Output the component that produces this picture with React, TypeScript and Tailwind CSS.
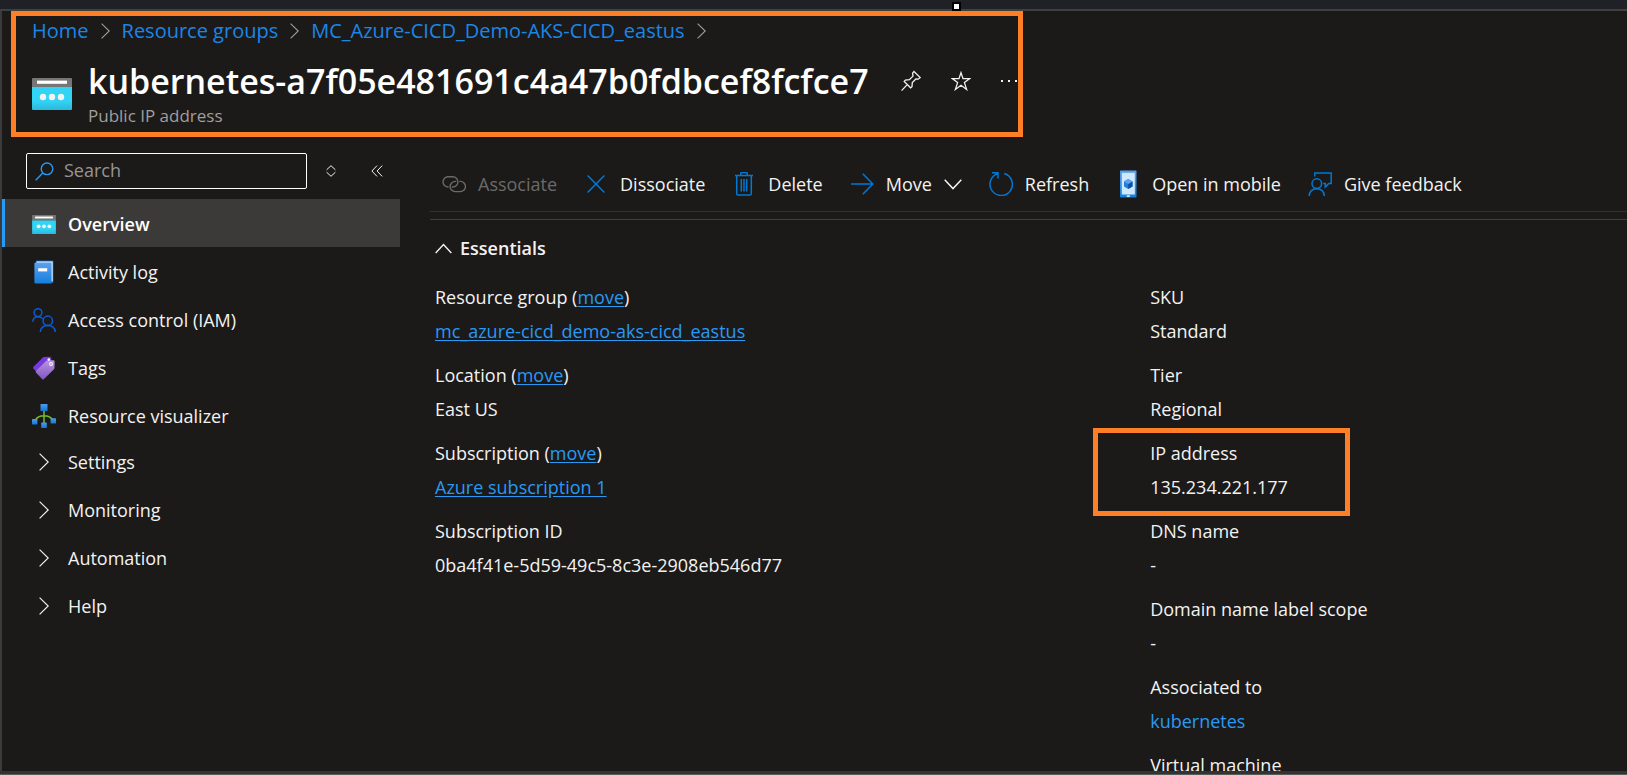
import type { ReactNode } from "react";

type IconProps = { className?: string };

const line = { fill: "none", stroke: "currentColor" } as const;

function ChevronIcon({ className }: IconProps) {
  return (
    <svg viewBox="0 0 10 18" className={className} {...line} strokeWidth="1.2" aria-hidden="true">
      <path d="M.6 .6 9.2 9 .6 17.4" />
    </svg>
  );
}

function CaretIcon({ className }: IconProps) {
  return (
    <svg viewBox="0 0 18 11" className={className} {...line} strokeWidth="1.5" aria-hidden="true">
      <path d="M.7 .8 9 9.6 17.3 .8" />
    </svg>
  );
}

function PublicIpIcon({ className }: IconProps) {
  return (
    <svg viewBox="0 0 40 32" className={className} aria-hidden="true">
      <defs>
        <linearGradient id="ip-body" x1="0" y1="0" x2="0" y2="1">
          <stop offset="0" stopColor="#32d4f5" />
          <stop offset=".6" stopColor="#32d4f5" />
          <stop offset="1" stopColor="#2bb8dc" />
        </linearGradient>
      </defs>
      <path d="M0 9h40v22a1 1 0 0 1-1 1H1a1 1 0 0 1-1-1z" fill="url(#ip-body)" />
      <path d="M1 0h38a1 1 0 0 1 1 1v8H0V1a1 1 0 0 1 1-1z" fill="#767676" />
      <path d="M5 2.6h30v3.2H5z" fill="#fff" />
      <circle cx="11" cy="19" r="3.2" fill="#f2f2f2" />
      <circle cx="20" cy="19" r="3.2" fill="#f2f2f2" />
      <circle cx="29" cy="19" r="3.2" fill="#f2f2f2" />
    </svg>
  );
}

function PinIcon() {
  return (
    <svg viewBox="0 0 20 22" className="h-[22px] w-5" {...line} strokeWidth="1.3" aria-hidden="true">
      <path d="M13 1.5 19.200 7.600 17.200 9.200 14.900 9 11.300 12.600 11 16.700 9.600 17.800 3.200 11.400 4.400 10.100 8.400 9.700 12 6.100 11.600 3.200zM6.200 14.600.6 20.600" />
    </svg>
  );
}

function StarIcon() {
  return (
    <svg viewBox="0 0 20 20" className="size-5" {...line} strokeWidth="1.3" aria-hidden="true">
      <path d="m10 1.600 2 6h6.800l-5.400 4 2.200 6.800-5.600-4.200-5.600 4.200 2.200-6.800-5.400-4H8z" />
    </svg>
  );
}

function MoreIcon() {
  return (
    <svg viewBox="0 0 16 4" className="h-1 w-4" fill="currentColor" aria-hidden="true">
      <path d="M0 1h2v2H0zM7 1h2v2H7zM14 1h2v2h-2z" />
    </svg>
  );
}

function SearchIcon() {
  return (
    <svg viewBox="0 0 19 19" className="size-[19px] text-[#2899f5]" {...line} strokeWidth="1.4" aria-hidden="true">
      <circle cx="12" cy="6.8" r="5.8" />
      <path d="M7.8 11 .7 18.2" />
    </svg>
  );
}

function SortIcon() {
  return (
    <svg viewBox="0 0 10 12" className="h-3 w-2.5" {...line} strokeWidth="1" aria-hidden="true">
      <path d="M.6 4.8 5 .7l4.4 4.1M.6 7.2 5 11.3l4.4-4.1" />
    </svg>
  );
}

function CollapseIcon() {
  return (
    <svg viewBox="0 0 12 12" className="size-3" {...line} strokeWidth="1" aria-hidden="true">
      <path d="M6 .6.9 6 6 11.4M11.2.6 6.1 6l5.1 5.4" />
    </svg>
  );
}

function LogIcon() {
  return (
    <svg viewBox="0 0 24 24" className="size-6" aria-hidden="true">
      <defs>
        <linearGradient id="log-body" x1="0" y1="0" x2="0" y2="1">
          <stop offset="0" stopColor="#5ea0ef" />
          <stop offset="1" stopColor="#1380dd" />
        </linearGradient>
      </defs>
      <path d="M4 .6h16.500a1 1 0 0 1 1 1v20.500a1 1 0 0 1-1 1H4z" fill="#0f5fa8" />
      <path d="M4.500 1.400h16.200v20H4.500z" fill="#e8f3fc" />
      <path d="M2.400 3.600a1.200 1.200 0 0 1 1.200-1.200H19.600V23.400H3.600a1.200 1.200 0 0 1-1.200-1.200z" fill="url(#log-body)" />
      <path d="M6.200 8.200h9v3.200h-9z" fill="#fff" />
    </svg>
  );
}

function PeopleIcon() {
  return (
    <svg viewBox="0 0 24 24" className="size-6 text-[#0a5bd6]" {...line} strokeWidth="1.5" aria-hidden="true">
      <circle cx="6" cy="4.600" r="3.900" />
      <path d="M.8 13.800C1 10.500 3 8.700 6 8.700c2.200 0 3.800.8 4.800 2.200" />
      <circle cx="15.800" cy="12.800" r="4.700" />
      <path d="M8.300 24c.4-4.200 3.400-6.500 7.500-6.500s7.100 2.300 7.500 6.500" />
    </svg>
  );
}

function TagIcon() {
  return (
    <svg viewBox="0 0 24 24" className="size-6" aria-hidden="true">
      <defs>
        <linearGradient id="tag-front" x1="0" y1="0" x2="0" y2="1">
          <stop offset="0" stopColor="#b796e3" />
          <stop offset="1" stopColor="#8254bd" />
        </linearGradient>
      </defs>
      <path d="M11.400.9 17.800.7a1.500 1.500 0 0 1 1.500 1.500V8L7.600 19.200 1.500 12.800a1.400 1.400 0 0 1 0-2z" fill="#773adc" />
      <path d="M14.600 4.600 21 4.300a1.500 1.500 0 0 1 1.600 1.500l-.1 6.300a1.500 1.500 0 0 1-.5 1.100L12 23a1.400 1.400 0 0 1-2 0l-5.800-6.200a1.400 1.400 0 0 1 0-2z" fill="url(#tag-front)" />
      <circle cx="16.800" cy="3.600" r="1.300" fill="#fff" />
      <circle cx="19" cy="8" r="1.900" fill="#fff" />
      <circle cx="19" cy="8" r=".8" fill="#8254bd" />
    </svg>
  );
}

function VisualizerIcon() {
  return (
    <svg viewBox="0 0 24 24" className="size-6" aria-hidden="true">
      <defs>
        <linearGradient id="node" x1="0" y1="0" x2="0" y2="1">
          <stop offset="0" stopColor="#4f9bee" />
          <stop offset="1" stopColor="#0f78d4" />
        </linearGradient>
      </defs>
      <path d="M12 6v13M3 16.500C5 13 7.600 11.800 12 11.800s7 1.200 9 4.700" fill="none" stroke="#76bc2d" strokeWidth="1.500" />
      <rect x="8.500" y="0" width="7" height="7" rx=".6" fill="url(#node)" />
      <rect x="0" y="15" width="5.400" height="5.400" rx=".6" fill="url(#node)" />
      <rect x="18.600" y="14.200" width="5.400" height="5.400" rx=".6" fill="url(#node)" />
      <rect x="9.200" y="18.600" width="5.600" height="5.400" rx=".6" fill="url(#node)" />
    </svg>
  );
}

function LinkIcon() {
  return (
    <svg viewBox="0 0 24 24" className="size-6" {...line} strokeWidth="1.400" aria-hidden="true">
      <path d="M6.600 14.900A5 5 0 0 1 5.600 4.800h5.200a5.100 5.100 0 0 1 0 10.200H9.800" />
      <path d="M17.400 9.400h1a5 5 0 0 1 0 10.200h-5.200a5.100 5.100 0 0 1 0-10.200h1" />
    </svg>
  );
}

function CrossIcon() {
  return (
    <svg viewBox="0 0 24 24" className="size-6 text-[#0078d4]" {...line} strokeWidth="1.500" aria-hidden="true">
      <path d="m3.600 3.400 16.800 17.200M20.400 3.400 3.600 20.600" />
    </svg>
  );
}

function TrashIcon() {
  return (
    <svg viewBox="0 0 24 24" className="size-6 text-[#0078d4]" {...line} strokeWidth="1.500" aria-hidden="true">
      <path d="M3 3.500h18M8.800 3.500V1.200q0-.6.6-.6h5.200q.6 0 .6.600v2.300M4.700 3.500v18.300q0 1.300 1.300 1.300h12q1.300 0 1.300-1.300V3.500M9.300 7v12.500M12 7v12.500M14.700 7v12.500" />
    </svg>
  );
}

function ArrowIcon() {
  return (
    <svg viewBox="0 0 24 24" className="size-6 text-[#0078d4]" {...line} strokeWidth="1.500" aria-hidden="true">
      <path d="M1 12h21.500M12.800 1.800 22.800 12l-10 10.200" />
    </svg>
  );
}

function RefreshIcon() {
  return (
    <svg viewBox="0 0 24 24" className="size-6 text-[#0078d4]" {...line} strokeWidth="1.500" aria-hidden="true">
      <path d="M15.200 1.500A11.200 11.200 0 1 1 8.500 1.700M3 .8h6v5.600" />
    </svg>
  );
}

function MobileIcon() {
  return (
    <svg viewBox="0 0 24 28" className="h-7 w-6" aria-hidden="true">
      <defs>
        <linearGradient id="phone" x1="0" y1="0" x2="0" y2="1">
          <stop offset="0" stopColor="#5ea0ef" />
          <stop offset="1" stopColor="#1380dd" />
        </linearGradient>
      </defs>
      <rect x="4" y=".5" width="16.500" height="27" rx=".8" fill="url(#phone)" />
      <path d="M5.800 2.800h13v21.700h-13z" fill="#cfe8fb" />
      <path d="M12.200 9 16.500 11.400v5.100l-4.300 2.500L8 16.500v-5.100z" fill="#1f7fe0" />
      <path d="M12.200 14V19l4.300-2.500v-5.100z" fill="#0f4fa0" />
      <path d="m12.200 9 4.300 2.400-4.300 2.500L8 11.400z" fill="#5ea0ef" />
      <rect x="10.800" y="25.300" width="3" height="1.600" fill="#e8f3fc" />
    </svg>
  );
}

function FeedbackIcon() {
  return (
    <svg viewBox="0 0 24 24" className="size-6 text-[#0078d4]" {...line} strokeWidth="1.500" aria-hidden="true">
      <path d="M6.800 4.500V1h16.400v10.500h-2.300l-3.600 3.400v-3.400h-2" />
      <circle cx="8.800" cy="11.600" r="4.800" />
      <path d="M1.200 24c.3-4.600 3.300-7.300 7.600-7.300s7.200 2.700 7.500 7.300" />
    </svg>
  );
}

const crumbs = ["Home", "Resource groups", "MC_Azure-CICD_Demo-AKS-CICD_eastus"];

const pages = [
  { label: "Overview", icon: <PublicIpIcon className="h-[19px] w-6" />, active: true },
  { label: "Activity log", icon: <LogIcon /> },
  { label: "Access control (IAM)", icon: <PeopleIcon /> },
  { label: "Tags", icon: <TagIcon /> },
  { label: "Resource visualizer", icon: <VisualizerIcon /> },
];

const sections = ["Settings", "Monitoring", "Automation", "Help"];

function Command({ icon, label, menu, disabled }: { icon: ReactNode; label: string; menu?: boolean; disabled?: boolean }) {
  return (
    <button type="button" disabled={disabled} className="flex shrink-0 items-center gap-3 whitespace-nowrap disabled:text-[#6b6a68]">
      {icon}
      <span>{label}</span>
      {menu && <CaretIcon className="h-[11px] w-[18px]" />}
    </button>
  );
}

function Field({ label, value, href, movable, underline, marked }: {
  label: string;
  value: string;
  href?: boolean;
  movable?: boolean;
  underline?: boolean;
  marked?: boolean;
}) {
  return (
    <div className="relative flex h-[78px] flex-col gap-2 whitespace-nowrap">
      {marked && (
        <div className="pointer-events-none absolute -top-3 -left-[57px] h-[88px] w-[257px] border-[5px] border-[#ff7f27]" />
      )}
      <dt className="leading-[26px]">
        {label}
        {movable && (
          <>
            {" ("}
            <a href="#move" className="text-[#2899f5] underline underline-offset-2">move</a>
            {")"}
          </>
        )}
      </dt>
      <dd className="leading-[26px]">
        {href ? (
          <a href="#open" className={underline ? "text-[#2899f5] underline underline-offset-2" : "text-[#2899f5]"}>
            {value}
          </a>
        ) : (
          value
        )}
      </dd>
    </div>
  );
}

export default function App() {
  return (
    <div className="flex h-screen flex-col overflow-hidden bg-[#1b1a19] font-['Open_Sans','Noto_Sans',sans-serif] text-[18px] leading-[26px] text-[#f3f2f1]">
      <div className="relative h-[11px] shrink-0 border-b-2 border-[#3f3f40] bg-[#202126]">
        <span className="absolute top-[2px] left-[952px] size-[9px] border-2 border-black bg-white" />
      </div>

      <div className="flex min-h-0 flex-1 flex-col overflow-hidden border-l-2 border-[#3a3a3a]">
        <header className="ml-[9px] h-[126px] w-[1012px] max-w-full shrink-0 overflow-hidden border-[5px] border-[#ff7f27] pl-4 whitespace-nowrap">
          <nav aria-label="Breadcrumb" className="pt-0.5">
            <ol className="flex items-center text-[20px]">
              {crumbs.map((crumb) => (
                <li key={crumb} className="flex items-center">
                  <a href="#crumb" className="text-[#1a86e8]">{crumb}</a>
                  <ChevronIcon className="mx-3 h-4 w-[9px] text-[#a19f9d]" />
                </li>
              ))}
            </ol>
          </nav>
          <div className="flex pt-3.5">
            <PublicIpIcon className="mt-5 mr-4 h-8 w-10 shrink-0" />
            <div>
              <div className="flex items-center">
                <h1 className="text-[34px] leading-[46px] font-semibold text-white">
                  kubernetes-a7f05e481691c4a47b0fdbcef8fcfce7
                </h1>
                <div className="ml-8 flex items-center gap-[30px]">
                  <button type="button" aria-label="Pin to dashboard"><PinIcon /></button>
                  <button type="button" aria-label="Add to favorites"><StarIcon /></button>
                  <button type="button" aria-label="More actions"><MoreIcon /></button>
                </div>
              </div>
              <p className="text-[17px] leading-6 text-[#a19f9d]">Public IP address</p>
            </div>
          </div>
        </header>

        <div className="flex min-h-0 flex-1">
          <aside className="w-[398px] shrink-0 pt-4">
            <div className="flex items-center pl-6">
              <label className="flex h-9 w-[281px] items-center gap-2.5 rounded-[2px] border border-white px-2">
                <SearchIcon />
                <input
                  type="text"
                  aria-label="Search"
                  placeholder="Search"
                  className="min-w-0 flex-1 bg-transparent pb-0.5 outline-none placeholder:text-[#979593]"
                />
              </label>
              <button type="button" aria-label="Expand all" className="ml-[19px]"><SortIcon /></button>
              <button type="button" aria-label="Collapse menu" className="ml-[35px]"><CollapseIcon /></button>
            </div>
            <nav aria-label="Resource menu" className="mt-2.5">
              {pages.map(({ label, icon, active }) => (
                <a
                  key={label}
                  href="#page"
                  aria-current={active ? "page" : undefined}
                  className={
                    active
                      ? "flex h-12 items-center gap-3 border-l-[3px] border-[#2899f5] bg-[#3b3a39] pt-0.5 pl-[27px] font-semibold text-white"
                      : "flex h-12 items-center gap-3 border-l-[3px] border-transparent pt-0.5 pl-[27px]"
                  }
                >
                  {icon}
                  {label}
                </a>
              ))}
              <div className="-mt-0.5">
                {sections.map((label) => (
                  <button key={label} type="button" className="flex h-12 w-full items-center gap-[19px] pt-0.5 pl-[37px] text-left">
                    <ChevronIcon className="h-[18px] w-2.5" />
                    {label}
                  </button>
                ))}
              </div>
            </nav>
          </aside>

          <main className="ml-[30px] min-w-0 flex-1 overflow-hidden pt-5">
            <div className="flex h-[55px] items-center gap-[27px] border-b border-[#323130] pl-3">
              <Command icon={<LinkIcon />} label="Associate" disabled />
              <Command icon={<CrossIcon />} label="Dissociate" />
              <Command icon={<TrashIcon />} label="Delete" />
              <Command icon={<ArrowIcon />} label="Move" menu />
              <Command icon={<RefreshIcon />} label="Refresh" />
              <Command icon={<MobileIcon />} label="Open in mobile" />
              <Command icon={<FeedbackIcon />} label="Give feedback" />
            </div>
            <section className="mt-[7px] border-t border-[#403f3e] pt-[15px] pl-[5px]">
              <h2>
                <button type="button" aria-expanded="true" className="flex items-center gap-2 font-semibold">
                  <CaretIcon className="h-[11px] w-[17px] rotate-180" />
                  Essentials
                </button>
              </h2>
              <div className="mt-[23px] grid grid-cols-[3fr_2fr]">
                <dl>
                  <Field label="Resource group" value="mc_azure-cicd_demo-aks-cicd_eastus" movable href underline />
                  <Field label="Location" value="East US" movable />
                  <Field label="Subscription" value="Azure subscription 1" movable href underline />
                  <Field label="Subscription ID" value="0ba4f41e-5d59-49c5-8c3e-2908eb546d77" />
                </dl>
                <dl>
                  <Field label="SKU" value="Standard" />
                  <Field label="Tier" value="Regional" />
                  <Field label="IP address" value="135.234.221.177" marked />
                  <Field label="DNS name" value="-" />
                  <Field label="Domain name label scope" value="-" />
                  <Field label="Associated to" value="kubernetes" href />
                  <Field label="Virtual machine" value="-" />
                </dl>
              </div>
            </section>
          </main>
        </div>
      </div>
      <div className="h-1 shrink-0 border-b border-[#5a5a5a] bg-[#333333]" />
    </div>
  );
}
